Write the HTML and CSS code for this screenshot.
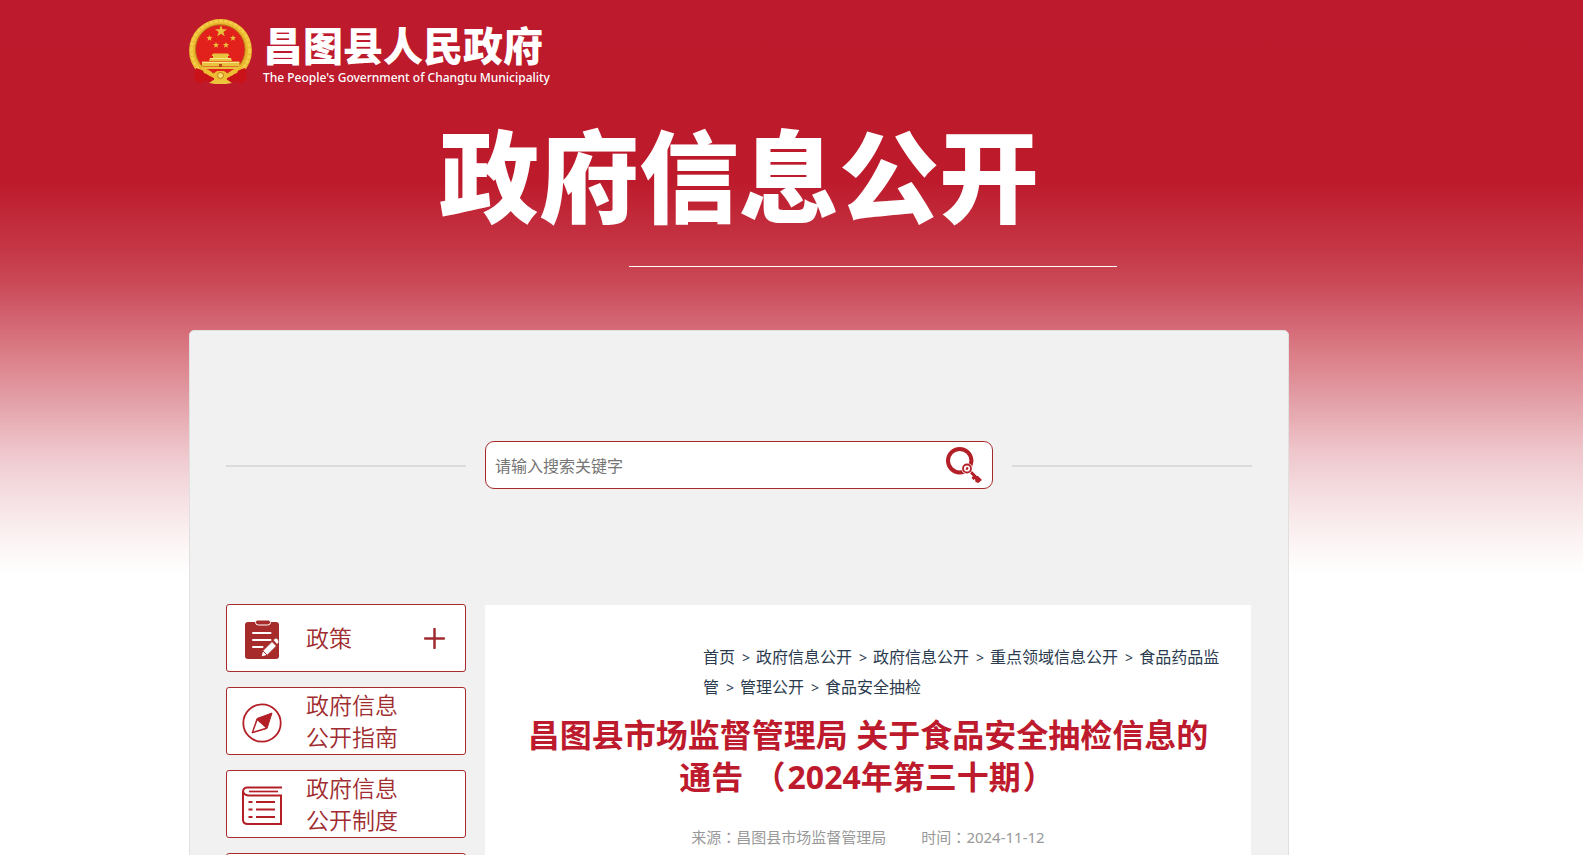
FILE: index.html
```html
<!DOCTYPE html>
<html lang="zh-CN">

<head>
  <meta charset="utf-8">
  <title>政府信息公开</title>
  <link rel="stylesheet" href="styles.css">
</head>

<body>
  <div class="wrap">
    <header class="header">
      <a class="logo" href="#">
        <svg class="emblem" viewBox="4 4 63 66" aria-hidden="true">
          <circle cx="35.5" cy="35.5" r="31.5" fill="#e9b52c" />
          <circle cx="35.5" cy="35" r="29" fill="none" stroke="#f3cd48" stroke-width="3" stroke-dasharray="4 1" />
          <circle cx="35.3" cy="34.5" r="24.8" fill="#e3211c" stroke="#b9761a" />
          <g fill="#e8c23c">
            <path d="M36 10l1.5 4.2 4.5.1-3.6 2.7 1.3 4.3-3.7-2.6-3.7 2.6 1.3-4.3-3.6-2.7 4.5-.1z" />
            <path d="M24.5 20l.8 2.1 2.3.1-1.8 1.4.6 2.2-1.9-1.2-1.9 1.2.6-2.2-1.8-1.4 2.3-.1z" />
            <path d="M48 20l.8 2.1 2.3.1-1.8 1.4.6 2.2-1.9-1.2-1.9 1.2.6-2.2-1.8-1.4 2.3-.1z" />
            <path d="M31 27l.8 2.1 2.3.1-1.8 1.4.6 2.2-1.9-1.2-1.9 1.2.6-2.2-1.8-1.4 2.3-.1z" />
            <path d="M41 27l.8 2.1 2.3.1-1.8 1.4.6 2.2-1.9-1.2-1.9 1.2.6-2.2-1.8-1.4 2.3-.1z" />
            <path d="M28 38.500h15l1.500 2.500h-18zM28 41h15v2h3l1 3H24l1-3h3zM17 46.500h37.500v5H17z" />
            <path d="M15 52h41l-3 2H18z" />
          </g>
          <path d="M25 43.500h21M17 47.500h37" stroke="#f9e58a" stroke-width="1" />
          <path d="M34 49h3v3h-3z" fill="#b8451c" />
          <path d="M11 53q8 2 12 7l6 3 1 5-11-2-3 3-6-3-1-8z" fill="#c91319" />
          <path d="M60 53q-8 2-12 7l-6 3-1 5 11-2 3 3 6-3 1-8z" fill="#c91319" />
          <path d="M17 53q8 1 11 6l4-3h7l4 3q3-5 11-6l-2 5-8 3-4 4H31l-4-4-8-3z" fill="#efbd34" />
          <circle cx="35.5" cy="60.5" r="3" fill="#f9df6a" stroke="#bb7d1b" />
          <path d="M24 68l6-4 5 2 6-2 6 4-6 1H30z" fill="#edc43e" />
        </svg>
        <span class="logo-text">
          <span class="logo-cn">昌图县人民政府</span>
          <span class="logo-en">The People's Government of Changtu Municipality</span>
        </span>
      </a>
      <h1 class="banner">政府信息公开</h1>
      <hr class="banner-line">
    </header>

    <main class="panel">
      <div class="search-row">
        <hr class="side-line">
        <form class="search" onsubmit="return false">
          <input class="search-input" type="text" placeholder="请输入搜索关键字" aria-label="请输入搜索关键字">
          <button class="search-btn" type="submit" aria-label="搜索">
            <svg width="36" height="36" viewBox="0 0 36 36">
              <circle cx="13.7" cy="13.7" r="11.7" fill="none" stroke="#b41e26" stroke-width="4" />
              <path d="M23 23l10.500 11" stroke="#b41e26" stroke-width="3" />
              <path d="M27 29l-1.500 2 2 2 1.500-1 .5 3 3 1 1.500-1.500 2-1.500-4-4z" fill="#b41e26" />
              <circle cx="21" cy="21.500" r="5.500" fill="#fff" />
              <circle cx="21" cy="21.500" r="4" fill="#fff" stroke="#b41e26" stroke-width="1.800" />
              <path d="M20.300 22.800l1.500-2.600" stroke="#b41e26" stroke-width="2" />
            </svg>
          </button>
        </form>
        <hr class="side-line">
      </div>

      <div class="columns">
        <nav class="menu">
          <a class="menu-item" href="#">
            <svg class="menu-icon" viewBox="0 0 40 40">
              <rect x="3" y="2" width="34" height="37" rx="3" fill="#a72b2b" />
              <path d="M15 0h12q1.500 0 1.500 2.500t-3 2.500h-9q-3 0-3-2.500t1.500-2.500z" fill="#a72b2b" stroke="#fff" stroke-width="1" />
              <path d="M11 13h17.500M11 20h17.500M11 27h9.500" stroke="#fff" stroke-width="2" stroke-linecap="round" />
              <path d="M19 37l1.500-6L30 21.500l4.500 4.500-9.500 9.500z" fill="#fff" stroke="#a72b2b" />
              <path d="M31.500 20l2-1.500q3 0 3 4L35 24z" fill="#fff" />
              <path d="M21 31l4 4" stroke="#a72b2b" />
            </svg>
            <span class="menu-text">政策</span>
            <svg class="plus" viewBox="0 0 21 21"><path d="M10.500 1v19M1 10.500h19" stroke="#a02c30" stroke-width="2.500" stroke-linecap="round" /></svg>
          </a>
          <a class="menu-item" href="#">
            <svg class="menu-icon" viewBox="0 0 40 40">
              <circle cx="20" cy="20" r="18.700" fill="none" stroke="#b41e26" stroke-width="1.800" />
              <path d="M30 10L15 15.500l-5 14.500 15-4.500z" fill="#b41e26" stroke="#b41e26" stroke-linejoin="round" />
              <path d="M15.500 17.500l-4 11 12-3.700z" fill="#fff" />
            </svg>
            <span class="menu-text">政府信息公开指南</span>
          </a>
          <a class="menu-item" href="#">
            <svg class="menu-icon" viewBox="0 0 40 40" fill="none" stroke="#b41e26">
              <path d="M40 1.500H5Q1 2 1 6v28q0 4 5 4h33V9.500H6q-5-1-4.500-4" stroke-width="2" />
              <path d="M7 5.500h29" stroke-width="1.700" />
              <path d="M6.500 16h4M14 16h19M6.500 23.500h4M14 23.500h19M6.500 31h4M14 31h19" stroke-width="2" />
            </svg>
            <span class="menu-text">政府信息公开制度</span>
          </a>
          <a class="menu-item" href="#" aria-label="更多"></a>
        </nav>

        <article class="article">
          <div class="crumbs">
            <a href="#">首页</a><span class="gt">&gt;</span><a href="#">政府信息公开</a><span class="gt">&gt;</span><a href="#">政府信息公开</a><span class="gt">&gt;</span><a href="#">重点领域信息公开</a><span class="gt">&gt;</span><a href="#">食品药品监管</a><span class="gt">&gt;</span><a href="#">管理公开</a><span class="gt">&gt;</span><a href="#">食品安全抽检</a>
          </div>
          <h2 class="title">昌图县市场监督管理局 关于食品安全抽检信息的通告 <span class="punct" lang="zh-TW">（</span>2024年第三十期<span class="punct" lang="zh-TW">）</span></h2>
          <p class="meta">
            <span>来源<span class="punct" lang="zh-TW">：</span>昌图县市场监督管理局</span>
            <span>时间<span class="punct" lang="zh-TW">：</span>2024-11-12</span>
          </p>
        </article>
      </div>
    </main>
  </div>
</body>

</html>
```

FILE: styles.css
```css
* {
  box-sizing: border-box;
}

body {
  margin: 0;
  padding-right: 105px;
  font-family: "Noto Sans", "Noto Sans CJK SC", sans-serif;
  font-size: 16px;
  background: #fff linear-gradient(#bd1a2d 0, #bd1a2b 180px, #c53746 250px, #ca4957 283px, #d26270 317px, #da7b84 350px, #e0929b 383px, #e6acb2 417px, #eec5cb 450px, #f3d8dc 483px, #f8e9ea 517px, #fdf7f7 550px, #fff 575px) no-repeat;
}

a {
  color: inherit;
  text-decoration: none;
}

hr {
  margin: 0;
  border: 0;
}

.wrap {
  max-width: 1100px;
  margin: 0 auto;
}

/* header */
.header {
  height: 330px;
  padding-top: 19px;
  color: #fff;
}

.logo {
  display: flex;
  gap: 11px;
  height: 71px;
}

.emblem {
  width: 63px;
  height: 66px;
}

.logo-text {
  display: flex;
  flex-direction: column;
}

.logo-cn {
  font-size: 40px;
  font-weight: 900;
  line-height: 54px;
}

.logo-en {
  font-size: 12px;
  font-weight: 500;
  line-height: 10px;
}

.banner {
  margin: 11px 0 0;
  font-size: 100px;
  font-weight: 900;
  line-height: 150px;
  text-align: center;
}

.banner-line {
  width: 488px;
  height: 1px;
  margin: 15px 0 0 440px;
  background: #fff;
}

/* main panel */
.panel {
  padding: 110px 36px 40px;
  border: 1px solid #e0e0e0;
  border-radius: 5px;
  background: #f1f1f1;
}

.search-row {
  display: flex;
  align-items: center;
  gap: 19px;
}

.side-line {
  width: 240px;
  height: 2px;
  margin-top: 2px;
  background: #dbdbdb;
}

.search {
  display: flex;
  flex: 1;
  height: 48px;
  border: 1px solid #a72b2b;
  border-radius: 9px;
  background: #fff;
}

.search-input {
  flex: 1;
  padding: 2px 9px 0;
  border: 0;
  background: none;
  font: inherit;
  outline: none;
}

.search-input::placeholder {
  color: #757575;
}

.search-btn {
  padding: 2px 10px 0 0;
  border: 0;
  background: none;
  cursor: pointer;
}

.columns {
  display: grid;
  grid-template-columns: 240px 1fr;
  gap: 19px;
  margin-top: 115px;
}

.menu {
  display: flex;
  flex-direction: column;
  gap: 15px;
}

.menu-item {
  display: flex;
  align-items: center;
  height: 68px;
  padding: 0 20px 0 15px;
  border: 1px solid #a72b2b;
  border-radius: 3px;
  background: #fff;
  color: #a02c30;
}

.menu-icon {
  width: 40px;
  height: 40px;
  margin: 3px 24px 0 0;
}

.menu-text {
  width: 96px;
  font-size: 23px;
  font-weight: 350;
  line-height: 32px;
}

.plus {
  width: 21px;
  height: 21px;
  margin-left: auto;
}

/* article */
.article {
  margin: 1px 1px 0 0;
  padding: 37px 28px;
  background: #fff;
}

.crumbs {
  max-width: 520px;
  margin-left: auto;
  line-height: 30px;
  color: #2b3b4f;
}

.gt {
  margin: 0 6px 0 7px;
  font-size: 14px;
  line-height: 1;
}

.title {
  margin: 12px 0 0;
  color: #bd1a2d;
  font-size: 32px;
  line-height: 42px;
  text-align: center;
}

.title .punct {
  margin: 0 2px;
}

.meta {
  display: flex;
  justify-content: center;
  gap: 35px;
  margin: 24px 0 0;
  color: #999;
  font-size: 15px;
  line-height: 30px;
}

.punct {
  font-family: "Noto Sans CJK TC", sans-serif;
  line-height: 1;
}
```
